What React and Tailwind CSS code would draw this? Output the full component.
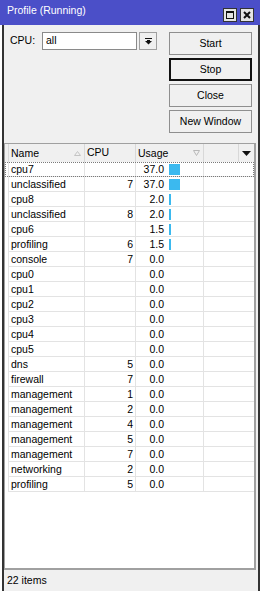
import React from "react";

const ROWS = [
  { name: "cpu7", cpu: "", usage: 37.0 },
  { name: "unclassified", cpu: "7", usage: 37.0 },
  { name: "cpu8", cpu: "", usage: 2.0 },
  { name: "unclassified", cpu: "8", usage: 2.0 },
  { name: "cpu6", cpu: "", usage: 1.5 },
  { name: "profiling", cpu: "6", usage: 1.5 },
  { name: "console", cpu: "7", usage: 0 },
  { name: "cpu0", cpu: "", usage: 0 },
  { name: "cpu1", cpu: "", usage: 0 },
  { name: "cpu2", cpu: "", usage: 0 },
  { name: "cpu3", cpu: "", usage: 0 },
  { name: "cpu4", cpu: "", usage: 0 },
  { name: "cpu5", cpu: "", usage: 0 },
  { name: "dns", cpu: "5", usage: 0 },
  { name: "firewall", cpu: "7", usage: 0 },
  { name: "management", cpu: "1", usage: 0 },
  { name: "management", cpu: "2", usage: 0 },
  { name: "management", cpu: "4", usage: 0 },
  { name: "management", cpu: "5", usage: 0 },
  { name: "management", cpu: "7", usage: 0 },
  { name: "networking", cpu: "2", usage: 0 },
  { name: "profiling", cpu: "5", usage: 0 },
];

// 37% fills the 11px square; anything non-zero gets at least a 2px sliver
function barWidth(v) {
  if (v <= 0) return 0;
  return Math.max(2, Math.round((v / 37) * 11));
}

function Button({ label, primary }) {
  return (
    <div
      className={
        "flex h-[23px] w-[83px] items-center justify-center bg-[#f0f0f0] " +
        (primary ? "border-2 border-[#111]" : "border border-[#8f8f8f]")
      }
    >
      {label}
    </div>
  );
}

function Row({ row, focused }) {
  const w = barWidth(row.usage);
  return (
    <div
      className={
        "flex h-[15px] " +
        (focused ? "outline outline-1 outline-dotted outline-[#7a7a7a] -outline-offset-1" : "")
      }
    >
      <div className="w-[3px]" />
      <div className="flex flex-1 border-b border-[#e3e3e3] leading-[14px]">
        <div className="w-[76px] border-l border-[#e3e3e3] pl-[2px]">{row.name}</div>
        <div className="w-[51px] border-l border-[#e3e3e3] pr-[2px] text-right">{row.cpu}</div>
        <div className="flex w-[68px] items-center border-l border-[#e3e3e3]">
          <span className="w-[28px] text-right">{row.usage.toFixed(1)}</span>
          {w > 0 && (
            <span className="ml-[5px] h-[11px] bg-[#3bb9ef]" style={{ width: w }} />
          )}
        </div>
        <div className="flex-1 border-l border-[#e3e3e3]" />
      </div>
    </div>
  );
}

export default function App() {
  return (
    <div className="flex h-[591px] w-[262px] flex-col overflow-hidden bg-white font-['Liberation_Sans',Arial,sans-serif] text-[10.5px] text-black">
      {/* title bar */}
      <div className="flex h-[25px] w-[260px] shrink-0 items-end justify-between bg-[#4b4fc8] pb-[3px] pl-[7px] pr-[6px]">
        <span className="mb-[3px] text-white">Profile (Running)</span>
        <div className="flex gap-[3px]">
          <div className="flex h-[14px] w-[14px] items-center justify-center border border-[#333] bg-[#e4e4e4]">
            <div className="h-[8px] w-[8px] border border-t-2 border-[#111]" />
          </div>
          <div className="flex h-[14px] w-[14px] items-center justify-center border border-[#333] bg-[#e4e4e4]">
            <svg width="8" height="8" viewBox="0 0 8 8">
              <path d="M1 1 L7 7 M7 1 L1 7" stroke="#111" strokeWidth="2" />
            </svg>
          </div>
        </div>
      </div>

      {/* body */}
      <div className="ml-[2px] flex w-[258px] flex-1 flex-col border-x-2 border-[#333] bg-[#f0f0f0]">
        <div className="flex justify-between pl-[6px] pr-[6px] pt-[7px]">
          <div className="flex h-[18px] items-center">
            <span className="w-[32px]">CPU:</span>
            <div className="flex h-[18px] w-[95px] items-center border border-[#8a8a8a] bg-white pl-[3px]">
              all
            </div>
            <div className="ml-[2px] flex h-[18px] w-[18px] items-center justify-center border border-[#a0a0a0] bg-[#f0f0f0]">
              <svg width="7" height="7" viewBox="0 0 7 7">
                <rect x="0" y="0" width="7" height="1" fill="#111" />
                <rect x="2" y="2" width="3" height="1" fill="#111" />
                <path d="M0 3 H7 L3.5 6.5 Z" fill="#111" />
              </svg>
            </div>
          </div>
          <div className="flex flex-col gap-[3px]">
            <Button label="Start" />
            <Button label="Stop" primary />
            <Button label="Close" />
            <Button label="New Window" />
          </div>
        </div>

        {/* list */}
        <div className="mr-[2px] mt-[10px] flex h-[427px] flex-col border-b-2 border-l border-r-2 border-t border-[#a0a0a0] bg-white">
          <div className="flex h-[18px] bg-[#f0f0f0] leading-[17px]">
            <div className="w-[3px]" />
            <div className="flex w-[76px] items-center justify-between border-l border-[#d8d8d8] pl-[2px] pr-[3px]">
              <span>Name</span>
              <svg width="7" height="5" viewBox="0 0 7 5">
                <path d="M0.5 4.5 L3.5 0.5 L6.5 4.5 Z" fill="none" stroke="#c4c4c4" />
              </svg>
            </div>
            <div className="w-[51px] border-l border-[#d8d8d8] pl-[2px]">CPU</div>
            <div className="flex w-[68px] items-center justify-between border-l border-[#d8d8d8] pl-[2px] pr-[3px]">
              <span>Usage</span>
              <svg width="7" height="6" viewBox="0 0 7 6">
                <path d="M0.5 0.5 L6.5 0.5 L3.5 5.5 Z" fill="none" stroke="#b8b8b8" />
              </svg>
            </div>
            <div className="w-[35px] border-l border-[#d8d8d8]" />
            <div className="flex flex-1 items-center justify-center border-l border-[#d8d8d8]">
              <svg width="9" height="5" viewBox="0 0 9 5">
                <path d="M0 0 H9 L4.5 5 Z" fill="#111" />
              </svg>
            </div>
          </div>
          {ROWS.map((r, i) => (
            <Row key={i} row={r} focused={i === 0} />
          ))}
        </div>

        {/* status bar */}
        <div className="flex h-[21px] items-center pl-[3px]">22 items</div>
      </div>
    </div>
  );
}
